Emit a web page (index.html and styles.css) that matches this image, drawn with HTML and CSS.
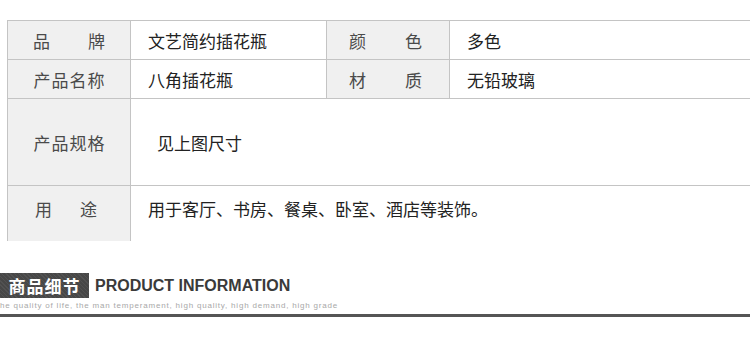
FILE: index.html
```html
<!DOCTYPE html>
<html lang="zh-CN">
<head>
<meta charset="utf-8">
<link rel="stylesheet" href="styles.css">
</head>
<body>
<div class="spec">
  <div class="cell label r1 pair"><span>品</span><span>牌</span></div>
  <div class="cell value r1">文艺简约插花瓶</div>
  <div class="cell label r1 pair right"><span>颜</span><span>色</span></div>
  <div class="cell value r1">多色</div>

  <div class="cell label r2 spaced">产品名称</div>
  <div class="cell value r2">八角插花瓶</div>
  <div class="cell label r2 pair right"><span>材</span><span>质</span></div>
  <div class="cell value r2">无铅玻璃</div>

  <div class="cell label r3 spaced">产品规格</div>
  <div class="cell value wide r3 indent">见上图尺寸</div>

  <div class="cell label r4 pair tight up"><span>用</span><span>途</span></div>
  <div class="cell value wide r4 up">用于客厅、书房、餐桌、卧室、酒店等装饰。</div>
</div>

<div class="section-head">
  <div class="title-row">
    <div class="badge">商品细节</div>
    <div class="en">PRODUCT INFORMATION</div>
  </div>
  <div class="sub">the quality of life, the man temperament, high quality, high demand, high grade</div>
  <div class="rule"></div>
</div>
</body>
</html>
```

FILE: styles.css
```css
* { box-sizing: border-box; }
html, body { margin: 0; padding: 0; background: #fff; }
body {
  font-family: "Noto Sans CJK SC", "Liberation Sans", sans-serif;
  color: #333;
  width: 750px;
  overflow: hidden;
}
.spec {
  margin: 20px 0 0 7px;
  width: 760px;
  display: grid;
  grid-template-columns: 123px 196px 123px 1fr;
  grid-template-rows: 39px 39px 87px 56px;
}
.cell {
  border-left: 1px solid #c4c4c4;
  border-top: 1px solid #c4c4c4;
  display: flex;
  align-items: center;
  font-size: 17px;
  line-height: 1;
}
.label {
  background: #f0f0f0;
  color: #4a4a4a;
  justify-content: center;
}
.spaced { letter-spacing: 1px; padding-left: 1px; }
.pair { gap: 38px; }
.pair.right { gap: 39px; padding-right: 5px; }
.pair.tight { gap: 28px; padding-right: 6px; }
.value {
  padding-left: 17px;
  color: #222;
}
.wide { grid-column: 2 / 5; }
.indent { padding-left: 26px; }
.up { padding-bottom: 10px; }

.section-head { margin-top: 32px; }
.title-row {
  display: flex;
  align-items: center;
  height: 25px;
}
.badge {
  width: 89px;
  height: 25px;
  background-color: #474747;
  background-image: repeating-linear-gradient(45deg, rgba(255,255,255,0.06) 0 1px, transparent 1px 3px);
  color: #fff;
  font-weight: 700;
  font-size: 17px;
  display: flex;
  align-items: center;
  justify-content: center;
  letter-spacing: 1px;
}
.en {
  margin-left: 6px;
  font-family: "Liberation Sans", Arial, sans-serif;
  font-weight: 700;
  font-size: 16px;
  color: #3a3a3a;
}
.sub {
  margin-top: 3px;
  margin-left: -3px;
  font-family: "Liberation Sans", Arial, sans-serif;
  font-size: 8px;
  letter-spacing: 0.8px;
  color: #a8a8a8;
  white-space: nowrap;
  line-height: 10px;
}
.rule {
  margin-top: 3px;
  height: 3px;
  background: #555;
}
```
